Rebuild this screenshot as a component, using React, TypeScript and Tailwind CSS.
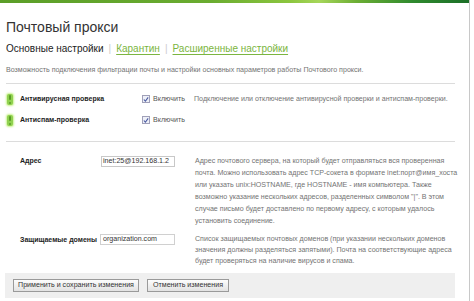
import React from "react";

const Indicator = () => (
  <div className="w-[6px] h-[11px] rounded-[2px] bg-[#8fd14f] shadow-[0_0_2px_1px_#c9f28f] flex flex-col items-center justify-between py-[1px]">
    <div className="w-[2px] h-[5px] bg-[#5a9a26] rounded-[1px]" />
    <div className="w-[2px] h-[2px] bg-[#5a9a26] rounded-[1px]" />
  </div>
);

const Check = () => (
  <div className="shrink-0 w-[8px] h-[8px] border border-[#a0a0b8] bg-[#eef0f8] flex items-center justify-center">
    <svg width="7" height="7" viewBox="0 0 7 7">
      <path d="M1 3.5 L2.8 5.5 L6 1" stroke="#4a5aa0" strokeWidth="1.3" fill="none" />
    </svg>
  </div>
);

export default function App() {
  const desc = "text-[7.1px] text-[#737373] whitespace-nowrap";
  const label = "text-[7px] font-bold text-[#1e1e1e] whitespace-nowrap";
  return (
    <div className="w-[474px] h-[301px] bg-white overflow-hidden font-['Liberation_Sans',_Arial,_sans-serif] flex">
      <div className="shrink-0 w-[470px] h-full flex flex-col border-r border-[#c8c8c8]">
        <div className="h-[3px] w-full bg-[linear-gradient(90deg,#5b9e28_0%,#6aac30_45%,#8cc63f_62%,#a6d65a_68%,#6cae34_76%,#2f8a2e_88%,#1c6f28_100%)]" />
        <div className="pl-[6px] flex flex-col">
          <div className="mt-[13px] h-[22px] text-[14px] leading-[22px] text-[#333]">Почтовый прокси</div>
          <div className="mt-[4px] flex items-center h-[14px] text-[10px] leading-[14px] whitespace-nowrap">
            <span className="text-[#222]">Основные настройки</span>
            <span className="mx-[5px] text-[#ccc]">|</span>
            <span className="text-[#7bb540] underline underline-offset-2">Карантин</span>
            <span className="mx-[5px] text-[#ccc]">|</span>
            <span className="text-[#7bb540] underline underline-offset-2">Расширенные настройки</span>
          </div>
          <div className={`mt-[8px] h-[12px] leading-[12px] ${desc}`}>
            Возможность подключения фильтрации почты и настройки основных параметров работы Почтового прокси.
          </div>
          <div className="mt-[7px] h-px bg-[#dcdcdc] w-[449px]" />
          <div className="flex flex-col mt-[9px] gap-[9px]">
            <div className="flex items-center h-[12px]">
              <div className="shrink-0 w-[14px] pl-[1px]"><Indicator /></div>
              <div className={`shrink-0 w-[122px] ${label}`}>Антивирусная проверка</div>
              <Check />
              <span className="shrink-0 ml-[3px] w-[41px] text-[7.1px] text-[#555] whitespace-nowrap">Включить</span>
              <span className={desc}>Подключение или отключение антивирусной проверки и антиспам-проверки.</span>
            </div>
            <div className="flex items-center h-[12px]">
              <div className="shrink-0 w-[14px] pl-[1px]"><Indicator /></div>
              <div className={`shrink-0 w-[122px] ${label}`}>Антиспам-проверка</div>
              <Check />
              <span className="shrink-0 ml-[3px] w-[41px] text-[7.1px] text-[#555] whitespace-nowrap">Включить</span>
            </div>
          </div>
          <div className="mt-[15px] h-px bg-[#dcdcdc] w-[449px]" />
          <div className="flex mt-[13px]">
            <div className={`shrink-0 w-[95px] pl-[14px] leading-[12px] ${label}`}>Адрес</div>
            <div className="shrink-0 w-[94px]">
              <div className="mt-[1px] w-[74px] h-[11px] border border-[#c8c8c8] bg-white text-[7.1px] leading-[9px] px-[1px] text-[#333] overflow-hidden whitespace-nowrap">inet:25@192.168.1.2</div>
            </div>
            <div className="flex flex-col">
              <span className={`leading-[12px] ${desc}`}>Адрес почтового сервера, на который будет отправляться вся проверенная</span>
              <span className={`leading-[12px] ${desc}`}>почта. Можно использовать адрес TCP-сокета в формате inet:порт@имя_хоста</span>
              <span className={`leading-[12px] ${desc}`}>или указать unix:HOSTNAME, где HOSTNAME - имя компьютера. Также</span>
              <span className={`leading-[12px] ${desc}`}>возможно указание нескольких адресов, разделенных символом "|". В этом</span>
              <span className={`leading-[12px] ${desc}`}>случае письмо будет доставлено по первому адресу, с которым удалось</span>
              <span className={`leading-[12px] ${desc}`}>установить соединение.</span>
            </div>
          </div>
          <div className="flex mt-[7px]">
            <div className={`shrink-0 w-[95px] pl-[14px] leading-[12px] ${label}`}>Защищаемые домены</div>
            <div className="shrink-0 w-[94px]">
              <div className="-ml-[1px] w-[75px] h-[11px] border border-[#d0d0d0] bg-white text-[7.1px] leading-[9px] px-[2px] text-[#333] overflow-hidden whitespace-nowrap">organization.com</div>
            </div>
            <div className="flex flex-col">
              <span className={`leading-[11px] ${desc}`}>Список защищаемых почтовых доменов (при указании нескольких доменов</span>
              <span className={`leading-[11px] ${desc}`}>значения должны разделяться запятыми). Почта на соответствующие адреса</span>
              <span className={`leading-[11px] ${desc}`}>будет проверяться на наличие вирусов и спама.</span>
            </div>
          </div>
          <div className="mt-[6px] -ml-[1px] w-[450px] h-[25px] bg-[#efefef] flex items-center gap-[8px] pl-[8px]">
            <button className="shrink-0 h-[13px] w-[126px] border border-[#9a9a9a] bg-[linear-gradient(#fdfdfd,#e2e2e2)] text-[7.1px] leading-[11px] text-[#333] whitespace-nowrap">Применить и сохранить изменения</button>
            <button className="shrink-0 h-[13px] w-[82px] border border-[#9a9a9a] bg-[linear-gradient(#fdfdfd,#e2e2e2)] text-[7.1px] leading-[11px] text-[#333] whitespace-nowrap">Отменить изменения</button>
          </div>
        </div>
      </div>
    </div>
  );
}
